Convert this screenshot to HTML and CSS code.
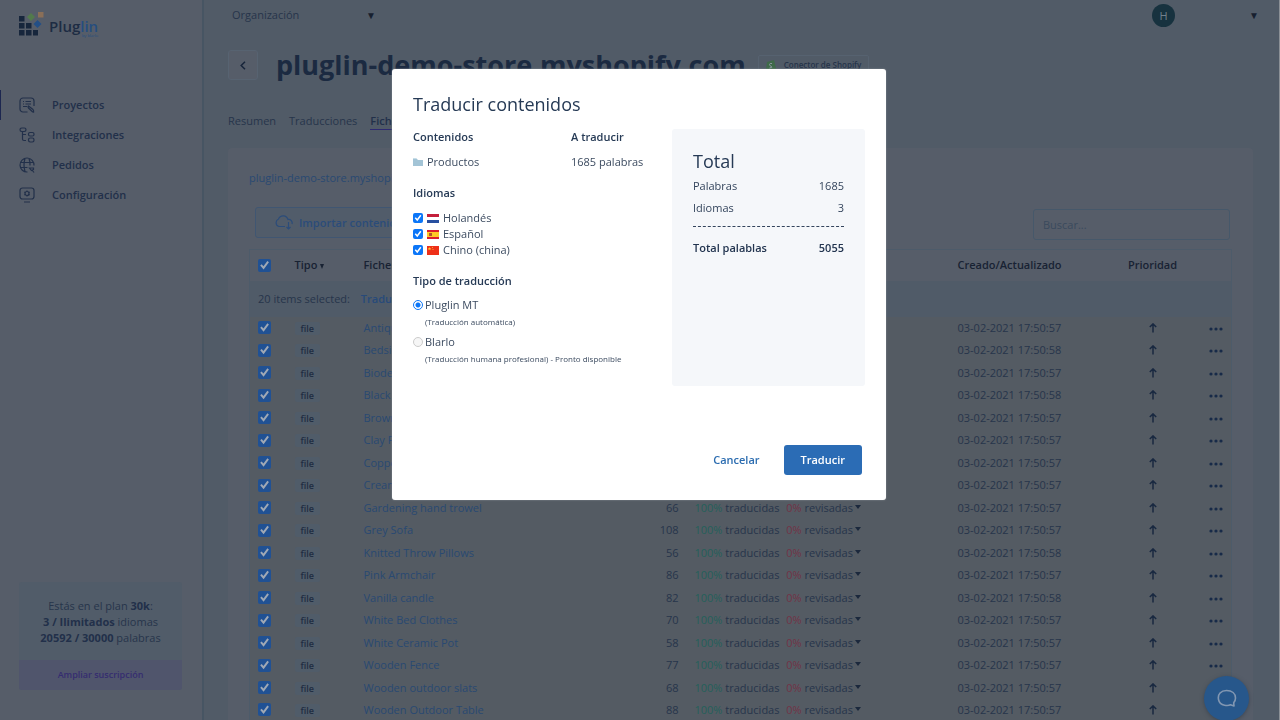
FILE: index.html
```html
<!DOCTYPE html>
<html lang="es">
<head>
<meta charset="utf-8">
<title>Pluglin - Ficheros</title>
<link rel="stylesheet" href="styles.css">
</head>
<body>
<svg class="defs" width="0" height="0" aria-hidden="true">
  <symbol id="up" viewBox="0 0 8 10"><path d="M4 9.500V1M.8 4L4 .9 7.200 4" fill="none" stroke="currentColor" stroke-width="1.500"/></symbol>
  <symbol id="dots" viewBox="0 0 14 4"><circle cx="2" cy="2" r="1.600"/><circle cx="7" cy="2" r="1.600"/><circle cx="12" cy="2" r="1.600"/></symbol>
</svg>
<div class="app">
  <aside class="sidebar">
    <a class="logo" href="#" aria-label="Pluglin by blarlo">
      <svg width="25" height="24" viewBox="0 0 25 24" aria-hidden="true">
        <g fill="#17263c"><path d="M0 4h5.500v5.500H0zM0 11h5.500v5.500H0zM7 11h5.500v5.500H7zM0 18h5.500v5.500H0zM7 18h5.500v5.500H7zM14 18h5v5.500h-5z"/></g>
        <path d="M12 1l4 4-4 4-4-4z" fill="#527a4c"/><path d="M19 0h5.500v5.500H19z" fill="#8a6f58"/><path d="M18.500 8l4 4-4 4-4-4z" fill="#234f86"/>
      </svg>
      <span class="brand"><span class="brand-name">Plug<span class="brand-blue">lin</span></span><small class="brand-by">by blarlo</small></span>
    </a>
    <nav class="nav">
      <a class="nav-item active" href="#"><svg class="ico" viewBox="0 0 16 16"><path d="M8.500 15H4a3 3 0 0 1-3-3V4a3 3 0 0 1 3-3h8a3 3 0 0 1 3 3v5M4 4.500h1M6.500 4.500H12M4 7h1M6.500 7H12M4 9.500h4M9.500 9l4.500 3.500q1.500 2-.5 2.300L9.500 11q-1-1.500 0-2zM14 14.500l1 1"/></svg>Proyectos</a>
      <a class="nav-item" href="#"><svg class="ico" viewBox="0 0 16 16"><rect x="1" y="1" width="6" height="3.500" rx="1.700"/><rect x="9.500" y="5.500" width="5.500" height="3.500" rx="1.500"/><rect x="9.500" y="11" width="5.500" height="4" rx="1.700"/><path d="M3.500 4.500V12q0 1.500 1.500 1.500h2M3.500 7.500H7"/></svg>Integraciones</a>
      <a class="nav-item" href="#"><svg class="ico" viewBox="0 0 16 16"><path d="M8.500 15A7 7 0 1 1 15 8.500M1.500 5.500h13M1.500 10.500h7M6 1.500q-2 6.500 0 13M10 1.500q1.500 4 1 7M10.500 11h4v1.500l-2 1zM13 13l2 2.500"/></svg>Pedidos</a>
      <a class="nav-item" href="#"><svg class="ico" viewBox="0 0 16 16"><rect x="1" y="1" width="14" height="11" rx="2.500"/><circle cx="8" cy="6.500" r="2"/><path d="M8 3.500v1M8 8.500v1M5.300 5l1 .5M9.700 7.500l1 .5M10.700 5l-1 .5M6.300 7.500l-1 .5M5 15h6"/></svg>Configuración</a>
    </nav>
    <section class="plan">
      <p class="plan-text">Estás en el plan <b>30k</b>:<br><b>3 / Ilimitados</b> idiomas<br><b>20592 / 30000</b> palabras</p>
      <button class="plan-btn" type="button">Ampliar suscripción</button>
    </section>
  </aside>
  <main class="main">
    <header class="topbar">
      <div class="select-wrap"><select class="org" aria-label="Organización"><option>Organización</option></select><span class="tri">▼</span></div>
      <div class="user"><span class="avatar">H</span><button class="tri-btn" type="button" aria-label="Menú de usuario">▼</button></div>
    </header>
    <div class="heading">
      <button class="back" type="button" aria-label="Volver"><svg width="6" height="9" viewBox="0 0 6 9"><path d="M5 .8L1.200 4.500 5 8.200" fill="none" stroke="currentColor" stroke-width="1.500"/></svg></button>
      <h1 class="title">pluglin-demo-store.myshopify.com</h1>
      <span class="connector"><svg width="11" height="12" viewBox="0 0 11 12"><path d="M1 3l7-2 2.500 10L7 12 0 10.500z" fill="#3f6a4a"/><path d="M6 4.500q-2.500-.5-2.500 1t2 2-2 1.500" fill="none" stroke="#8b969f"/></svg>Conector de Shopify</span>
    </div>
    <nav class="tabs"><a class="tab" href="#">Resumen</a><a class="tab" href="#">Traducciones</a><a class="tab current" href="#">Ficheros</a></nav>
    <section class="card">
      <a class="crumb" href="#">pluglin-demo-store.myshopify.com</a>
      <div class="tools">
        <button class="import" type="button"><svg width="19" height="15" viewBox="0 0 19 15"><path d="M11 11.500H5a4 4 0 0 1-.5-7.500 5 5 0 0 1 9.500.5 3.500 3.500 0 0 1 4 4.500M14.500 7v7M12.500 12l2 2 2-2" fill="none" stroke="currentColor" stroke-width="1.200"/></svg>Importar contenidos</button>
        <input class="search" type="text" placeholder="Buscar..." aria-label="Buscar">
      </div>
      <table class="files">
        <colgroup><col class="c-check"><col class="c-type"><col><col class="c-words"><col class="c-progress"><col class="c-date"><col class="c-prio"><col class="c-more"></colgroup>
        <thead>
          <tr><th><input class="check" type="checkbox" checked aria-label="Seleccionar todo"></th><th>Tipo<span class="sort"></span></th><th>Fichero</th><th class="num">Palabras</th><th>Progreso</th><th>Creado/Actualizado</th><th class="mid prio">Prioridad</th><th></th></tr>
        </thead>
        <tbody>
          <tr class="selected"><td colspan="8">20 items selected: <a class="bulk" href="#">Traducir</a></td></tr>
          <tr><td><input class="check" type="checkbox" checked aria-label="Antique Drawers"></td><td><span class="tag">file</span></td><td><a class="link" href="#">Antique Drawers</a></td><td class="num">72</td><td class="progress"><span class="done">100%</span> traducidas <span class="rev">0%</span> revisadas</td><td>03-02-2021 17:50:57</td><td class="mid"><svg class="up"><use href="#up"/></svg></td><td class="mid"><button class="more" type="button" aria-label="Opciones"><svg class="dots"><use href="#dots"/></svg></button></td></tr>
          <tr><td><input class="check" type="checkbox" checked aria-label="Bedside Table"></td><td><span class="tag">file</span></td><td><a class="link" href="#">Bedside Table</a></td><td class="num">69</td><td class="progress"><span class="done">100%</span> traducidas <span class="rev">0%</span> revisadas</td><td>03-02-2021 17:50:58</td><td class="mid"><svg class="up"><use href="#up"/></svg></td><td class="mid"><button class="more" type="button" aria-label="Opciones"><svg class="dots"><use href="#dots"/></svg></button></td></tr>
          <tr><td><input class="check" type="checkbox" checked aria-label="Biodegradable pot"></td><td><span class="tag">file</span></td><td><a class="link" href="#">Biodegradable pot</a></td><td class="num">98</td><td class="progress"><span class="done">100%</span> traducidas <span class="rev">0%</span> revisadas</td><td>03-02-2021 17:50:57</td><td class="mid"><svg class="up"><use href="#up"/></svg></td><td class="mid"><button class="more" type="button" aria-label="Opciones"><svg class="dots"><use href="#dots"/></svg></button></td></tr>
          <tr><td><input class="check" type="checkbox" checked aria-label="Black Bedside"></td><td><span class="tag">file</span></td><td><a class="link" href="#">Black Bedside</a></td><td class="num">69</td><td class="progress"><span class="done">100%</span> traducidas <span class="rev">0%</span> revisadas</td><td>03-02-2021 17:50:58</td><td class="mid"><svg class="up"><use href="#up"/></svg></td><td class="mid"><button class="more" type="button" aria-label="Opciones"><svg class="dots"><use href="#dots"/></svg></button></td></tr>
          <tr><td><input class="check" type="checkbox" checked aria-label="Brown Pillows"></td><td><span class="tag">file</span></td><td><a class="link" href="#">Brown Pillows</a></td><td class="num">71</td><td class="progress"><span class="done">100%</span> traducidas <span class="rev">0%</span> revisadas</td><td>03-02-2021 17:50:57</td><td class="mid"><svg class="up"><use href="#up"/></svg></td><td class="mid"><button class="more" type="button" aria-label="Opciones"><svg class="dots"><use href="#dots"/></svg></button></td></tr>
          <tr><td><input class="check" type="checkbox" checked aria-label="Clay Pot"></td><td><span class="tag">file</span></td><td><a class="link" href="#">Clay Pot</a></td><td class="num">55</td><td class="progress"><span class="done">100%</span> traducidas <span class="rev">0%</span> revisadas</td><td>03-02-2021 17:50:57</td><td class="mid"><svg class="up"><use href="#up"/></svg></td><td class="mid"><button class="more" type="button" aria-label="Opciones"><svg class="dots"><use href="#dots"/></svg></button></td></tr>
          <tr><td><input class="check" type="checkbox" checked aria-label="Copper Light"></td><td><span class="tag">file</span></td><td><a class="link" href="#">Copper Light</a></td><td class="num">85</td><td class="progress"><span class="done">100%</span> traducidas <span class="rev">0%</span> revisadas</td><td>03-02-2021 17:50:57</td><td class="mid"><svg class="up"><use href="#up"/></svg></td><td class="mid"><button class="more" type="button" aria-label="Opciones"><svg class="dots"><use href="#dots"/></svg></button></td></tr>
          <tr><td><input class="check" type="checkbox" checked aria-label="Cream Sofa"></td><td><span class="tag">file</span></td><td><a class="link" href="#">Cream Sofa</a></td><td class="num">104</td><td class="progress"><span class="done">100%</span> traducidas <span class="rev">0%</span> revisadas</td><td>03-02-2021 17:50:57</td><td class="mid"><svg class="up"><use href="#up"/></svg></td><td class="mid"><button class="more" type="button" aria-label="Opciones"><svg class="dots"><use href="#dots"/></svg></button></td></tr>
          <tr><td><input class="check" type="checkbox" checked aria-label="Gardening hand trowel"></td><td><span class="tag">file</span></td><td><a class="link" href="#">Gardening hand trowel</a></td><td class="num">66</td><td class="progress"><span class="done">100%</span> traducidas <span class="rev">0%</span> revisadas</td><td>03-02-2021 17:50:57</td><td class="mid"><svg class="up"><use href="#up"/></svg></td><td class="mid"><button class="more" type="button" aria-label="Opciones"><svg class="dots"><use href="#dots"/></svg></button></td></tr>
          <tr><td><input class="check" type="checkbox" checked aria-label="Grey Sofa"></td><td><span class="tag">file</span></td><td><a class="link" href="#">Grey Sofa</a></td><td class="num">108</td><td class="progress"><span class="done">100%</span> traducidas <span class="rev">0%</span> revisadas</td><td>03-02-2021 17:50:57</td><td class="mid"><svg class="up"><use href="#up"/></svg></td><td class="mid"><button class="more" type="button" aria-label="Opciones"><svg class="dots"><use href="#dots"/></svg></button></td></tr>
          <tr><td><input class="check" type="checkbox" checked aria-label="Knitted Throw Pillows"></td><td><span class="tag">file</span></td><td><a class="link" href="#">Knitted Throw Pillows</a></td><td class="num">56</td><td class="progress"><span class="done">100%</span> traducidas <span class="rev">0%</span> revisadas</td><td>03-02-2021 17:50:58</td><td class="mid"><svg class="up"><use href="#up"/></svg></td><td class="mid"><button class="more" type="button" aria-label="Opciones"><svg class="dots"><use href="#dots"/></svg></button></td></tr>
          <tr><td><input class="check" type="checkbox" checked aria-label="Pink Armchair"></td><td><span class="tag">file</span></td><td><a class="link" href="#">Pink Armchair</a></td><td class="num">86</td><td class="progress"><span class="done">100%</span> traducidas <span class="rev">0%</span> revisadas</td><td>03-02-2021 17:50:57</td><td class="mid"><svg class="up"><use href="#up"/></svg></td><td class="mid"><button class="more" type="button" aria-label="Opciones"><svg class="dots"><use href="#dots"/></svg></button></td></tr>
          <tr><td><input class="check" type="checkbox" checked aria-label="Vanilla candle"></td><td><span class="tag">file</span></td><td><a class="link" href="#">Vanilla candle</a></td><td class="num">82</td><td class="progress"><span class="done">100%</span> traducidas <span class="rev">0%</span> revisadas</td><td>03-02-2021 17:50:58</td><td class="mid"><svg class="up"><use href="#up"/></svg></td><td class="mid"><button class="more" type="button" aria-label="Opciones"><svg class="dots"><use href="#dots"/></svg></button></td></tr>
          <tr><td><input class="check" type="checkbox" checked aria-label="White Bed Clothes"></td><td><span class="tag">file</span></td><td><a class="link" href="#">White Bed Clothes</a></td><td class="num">70</td><td class="progress"><span class="done">100%</span> traducidas <span class="rev">0%</span> revisadas</td><td>03-02-2021 17:50:57</td><td class="mid"><svg class="up"><use href="#up"/></svg></td><td class="mid"><button class="more" type="button" aria-label="Opciones"><svg class="dots"><use href="#dots"/></svg></button></td></tr>
          <tr><td><input class="check" type="checkbox" checked aria-label="White Ceramic Pot"></td><td><span class="tag">file</span></td><td><a class="link" href="#">White Ceramic Pot</a></td><td class="num">58</td><td class="progress"><span class="done">100%</span> traducidas <span class="rev">0%</span> revisadas</td><td>03-02-2021 17:50:57</td><td class="mid"><svg class="up"><use href="#up"/></svg></td><td class="mid"><button class="more" type="button" aria-label="Opciones"><svg class="dots"><use href="#dots"/></svg></button></td></tr>
          <tr><td><input class="check" type="checkbox" checked aria-label="Wooden Fence"></td><td><span class="tag">file</span></td><td><a class="link" href="#">Wooden Fence</a></td><td class="num">77</td><td class="progress"><span class="done">100%</span> traducidas <span class="rev">0%</span> revisadas</td><td>03-02-2021 17:50:57</td><td class="mid"><svg class="up"><use href="#up"/></svg></td><td class="mid"><button class="more" type="button" aria-label="Opciones"><svg class="dots"><use href="#dots"/></svg></button></td></tr>
          <tr><td><input class="check" type="checkbox" checked aria-label="Wooden outdoor slats"></td><td><span class="tag">file</span></td><td><a class="link" href="#">Wooden outdoor slats</a></td><td class="num">68</td><td class="progress"><span class="done">100%</span> traducidas <span class="rev">0%</span> revisadas</td><td>03-02-2021 17:50:57</td><td class="mid"><svg class="up"><use href="#up"/></svg></td><td class="mid"><button class="more" type="button" aria-label="Opciones"><svg class="dots"><use href="#dots"/></svg></button></td></tr>
          <tr><td><input class="check" type="checkbox" checked aria-label="Wooden Outdoor Table"></td><td><span class="tag">file</span></td><td><a class="link" href="#">Wooden Outdoor Table</a></td><td class="num">88</td><td class="progress"><span class="done">100%</span> traducidas <span class="rev">0%</span> revisadas</td><td>03-02-2021 17:50:57</td><td class="mid"><svg class="up"><use href="#up"/></svg></td><td class="mid"><button class="more" type="button" aria-label="Opciones"><svg class="dots"><use href="#dots"/></svg></button></td></tr>
        </tbody>
      </table>
    </section>
  </main>
</div>
<button class="chat" type="button" aria-label="Chat"><svg width="20" height="19" viewBox="0 0 20 19"><path d="M17 17l-3.500-1.200C12 16.600 3 18 1.500 10.500.5 5 4 1.500 9.500 1.500S18.500 4.500 18.500 9c0 2-.7 3.500-1.800 4.800z" fill="none" stroke="#8297b2" stroke-width="1.600" stroke-linejoin="round"/></svg></button>
<div class="overlay">
  <form class="dialog" role="dialog" aria-labelledby="dlg-title">
    <h2 class="dlg-title" id="dlg-title">Traducir contenidos</h2>
    <div class="dlg-body">
      <div class="options">
        <div class="pair"><h3 class="label">Contenidos</h3><h3 class="label">A traducir</h3>
          <span class="folder"><svg width="10" height="8" viewBox="0 0 10 8"><path d="M0 1h4l1 1h5v6H0z" fill="#a3c4d6"/><path d="M0 0h3.500l.5 1H0z" fill="#c6dde8"/></svg>Productos</span><span>1685 palabras</span></div>
        <h3 class="label">Idiomas</h3>
        <div class="langs">
          <label class="lang"><input class="check" type="checkbox" checked><svg class="flag" viewBox="0 0 12 9"><path fill="#fff" d="M0 0h12v9H0z"/><path fill="#c4203b" d="M0 0h12v3H0z"/><path fill="#2850a0" d="M0 6h12v3H0z"/></svg>Holandés</label>
          <label class="lang"><input class="check" type="checkbox" checked><svg class="flag" viewBox="0 0 12 9"><path fill="#dc1e2c" d="M0 0h12v9H0z"/><path fill="#fecb25" d="M0 2h12v5H0z"/><path fill="#b3552b" d="M2 3h3v3H2z"/></svg>Español</label>
          <label class="lang"><input class="check" type="checkbox" checked><svg class="flag" viewBox="0 0 12 9"><path fill="#ee3019" d="M0 0h12v9H0z"/><path fill="#fbd32b" d="M2.500 1l.5 1.200h1.300l-1 .8.4 1.300-1.200-.8-1.200.8.400-1.300-1-.8H2zM5 1h1v.7H5zM5.500 3h1v.7h-1z"/></svg>Chino (china)</label>
        </div>
        <h3 class="label">Tipo de traducción</h3>
        <div class="types">
          <label class="type"><input class="radio" type="radio" name="tipo" checked>Pluglin MT<small class="hint">(Traducción automática)</small></label>
          <label class="type"><input class="radio" type="radio" name="tipo" disabled>Blarlo<small class="hint">(Traducción humana profesional) - Pronto disponible</small></label>
        </div>
      </div>
      <section class="total">
        <h2 class="total-title">Total</h2>
        <p class="line"><span>Palabras</span><span>1685</span></p>
        <p class="line"><span>Idiomas</span><span>3</span></p>
        <p class="line sum"><span>Total palablas</span><span>5055</span></p>
      </section>
    </div>
    <div class="actions"><button class="cancel" type="button">Cancelar</button><button class="submit" type="button">Traducir</button></div>
  </form>
</div>
</body>
</html>
```
FILE: styles.css
```css
:root {
  --side: #565d69;
  --page: #515b67;
  --ink: #22304a;
  --text: #27354b;
  --blue: #294972;
}
* { box-sizing: border-box; }
html, body { height: 100%; overflow: hidden; }
body { margin: 0; background: var(--page); color: var(--text); font: 11px/16px "Open Sans", "Noto Sans", sans-serif; }
h1, h2, h3, p { margin: 0; }
a { color: inherit; text-decoration: none; }
button, input, select { font: inherit; color: inherit; }
button { border: 0; padding: 0; background: none; }
.defs { position: absolute; }
.app { display: flex; height: 100%; border-right: 1px solid #8b9096; }

.sidebar { flex: none; display: flex; flex-direction: column; width: 204px; padding: 12px 0 30px; background: var(--side); border-right: 2px solid #475563; }
.logo { display: flex; gap: 5px; height: 30px; margin: 0 19px; }
.brand { display: flex; flex-direction: column; align-items: flex-end; padding-top: 5px; color: #1d2c43; font-size: 15px; font-weight: 600; line-height: 18px; }
.brand-blue, .brand-by { color: #254d80; }
.brand-by { margin-top: -1px; font-size: 4px; line-height: 4px; font-weight: 400; }
.nav { margin-top: 48px; }
.nav-item { display: flex; align-items: center; gap: 17px; height: 30px; padding-left: 18px; border-left: 1px solid transparent; color: var(--ink); font-weight: 600; }
.nav-item.active { border-color: #1d2750; }
.ico { width: 16px; height: 16px; fill: none; stroke: currentColor; stroke-width: 1.2; }
.plan { margin: auto 20px 0 19px; border-radius: 3px; overflow: hidden; background: #515c69; text-align: center; }
.plan-text { padding: 16px 0 14px; }
.plan-text b { color: var(--ink); }
.plan-btn { width: 100%; height: 30px; background: #50556c; color: #352d70; font-size: 9px; font-weight: 600; }

.main { flex: 1; min-width: 0; padding: 0 26px 0 24px; }
.topbar { display: flex; justify-content: space-between; height: 30px; align-items: center; }
.select-wrap { display: flex; align-items: center; width: 148px; }
.org { flex: 1; appearance: none; border: 0; padding: 0 4px; background: none; }
.tri, .tri-btn { color: #17202f; font-size: 10px; }
.user { display: flex; align-items: center; gap: 74px; margin-right: -6px; }
.avatar { width: 23px; height: 23px; border-radius: 50%; background: #17323f; color: #71808c; line-height: 23px; text-align: center; }
.heading { display: flex; align-items: center; height: 70px; }
.back { display: grid; place-items: center; width: 30px; height: 30px; margin: 0 18px 0 0; border: 1px solid #576371; border-radius: 3px; background: var(--side); color: #17253a; }
.title { color: #1b2a41; font-size: 27px; line-height: 38px; font-weight: 700; }
.connector { display: flex; align-items: center; gap: 7px; height: 20px; margin-left: 12px; padding: 0 7px; border: 1px solid #566270; border-radius: 2px; color: #26344a; font-size: 8px; font-weight: 600; }
.tabs { display: flex; gap: 13px; height: 48px; align-items: flex-start; padding-top: 13px; }
.tab { height: 16px; }
.tab.current { color: var(--ink); font-weight: 600; box-shadow: 0 1px #2e2a70; }
.card { padding: 22px 21px; border-radius: 4px; background: var(--side); }
.crumb { display: block; color: var(--blue); }
.tools { display: flex; justify-content: space-between; padding: 21px 2px 9px 6px; }
.import { display: flex; align-items: center; gap: 6px; height: 31px; padding: 0 18px; border: 1px solid #405672; border-radius: 3px; background: #515c6a; color: #2b4c7a; font-weight: 600; }
.search { width: 197px; height: 31px; margin-top: 2px; padding: 0 9px; border: 1px solid #46586a; border-radius: 3px; background: var(--side); }
.search::placeholder { color: #3a4a5d; }

.files { width: 100%; border-collapse: collapse; table-layout: fixed; border: 1px solid #4d5b6a; }
.c-check { width: 37px; }
.c-type { width: 69px; }
.c-words { width: 87px; }
.c-progress { width: 263px; }
.c-date { width: 155px; }
.c-prio { width: 96px; }
.c-more { width: 31px; }
.files th { height: 31px; padding: 0 8px; color: #182233; font-weight: 600; text-align: left; }
.files td { height: 22px; padding: 0 8px; }
.files tr:nth-child(odd) td { height: 23px; }
.files tbody tr { background: #545b63; }
.files tbody tr.selected { background: #505b68; }
.files tr.selected td { height: 36px; }
.bulk { margin-left: 8px; color: #274a7a; font-weight: 600; }
.files .num { text-align: right; }
.files .mid { padding: 0; text-align: center; }
.sort { display: inline-block; margin-left: 3px; border: 2px solid transparent; border-top: 5px solid #182233; border-bottom: 0; }
.check { appearance: none; display: block; width: 13px; height: 13px; margin: 0; border-radius: 2px; background: #205194; }
.check::before { content: ""; display: block; width: 13px; height: 13px; background: #9fa8b5; clip-path: polygon(17% 52%, 28% 42%, 42% 58%, 72% 17%, 84% 27%, 43% 82%); }
.tag { display: inline-block; padding: 0 6px; border-radius: 2px; background: #505c69; color: #202d42; font-size: 9px; font-weight: 600; line-height: 13px; }
.link { color: var(--blue); }
.progress { white-space: nowrap; }
.progress::after { content: ""; display: inline-block; margin: 0 0 3px 2px; border: 3px solid transparent; border-top: 4px solid #1b283c; border-bottom: 0; }
.done { color: #24605a; }
.rev { margin-left: 4px; color: #723346; }
.up { width: 8px; height: 10px; display: block; margin: 0 auto; color: #182840; }
.more { display: block; margin: 2px auto 0; }
.dots { display: block; width: 14px; height: 4px; fill: #172a48; }
.chat { position: fixed; right: 31px; bottom: -1px; display: grid; place-items: center; width: 45px; height: 45px; border-radius: 50%; background: #27578b; box-shadow: 0 1px 4px #3d4651; }

.overlay { position: fixed; inset: 0; display: flex; justify-content: center; align-items: flex-start; padding: 69px 2px 0 0; }
.dialog { width: 494px; padding: 21px; border-radius: 3px; background: #fff; color: #3c4b60; box-shadow: 0 0 2px #8b9097; }
.dlg-title { color: #263a55; font-size: 18px; line-height: 28px; font-weight: 400; }
.dlg-body { display: flex; justify-content: space-between; margin-top: 11px; }
.label { color: #263a55; font-size: 11px; line-height: 16px; font-weight: 600; }
.pair { display: grid; grid-template-columns: 158px auto; row-gap: 9px; margin-bottom: 15px; }
.folder { display: flex; align-items: center; gap: 4px; }
.langs { margin: 9px 0 15px; }
.lang { display: flex; align-items: center; gap: 4px; }
.dialog .check { width: 10px; height: 10px; background: #0b76f8; }
.dialog .check::before { width: 10px; height: 10px; background: #fff; }
.flag { width: 12px; height: 9px; }
.types { display: grid; gap: 4px; margin-top: 8px; }
.type { display: grid; grid-template-columns: 10px auto; column-gap: 2px; align-items: center; }
.radio { appearance: none; width: 10px; height: 10px; margin: 0; border: 1px solid #0b76f8; border-radius: 50%; background: radial-gradient(circle, #0b76f8 2px, #fff 3px); }
.radio:disabled { border-color: #ccc; background: #f6f6f6; }
.hint { grid-column: 2; font-size: 8px; line-height: 17px; }
.total { flex: none; width: 193px; min-height: 257px; padding: 21px; border-radius: 3px; background: #f5f7fa; color: #33445c; }
.total-title { color: #263a55; font-size: 18px; line-height: 22px; font-weight: 400; }
.line { display: flex; justify-content: space-between; margin-top: 6px; }
.line.sum { margin-top: 10px; padding-top: 13px; border-top: 1px dashed #33445c; color: #22344f; font-weight: 600; }
.actions { display: flex; justify-content: flex-end; gap: 7px; margin-top: 59px; padding: 0 3px 4px; }
.cancel { padding: 0 17px; height: 30px; color: #2b6cb0; font-weight: 600; }
.submit { padding: 0 17px; height: 30px; border-radius: 3px; background: #2b6cb5; color: #fff; font-weight: 600; }
```
